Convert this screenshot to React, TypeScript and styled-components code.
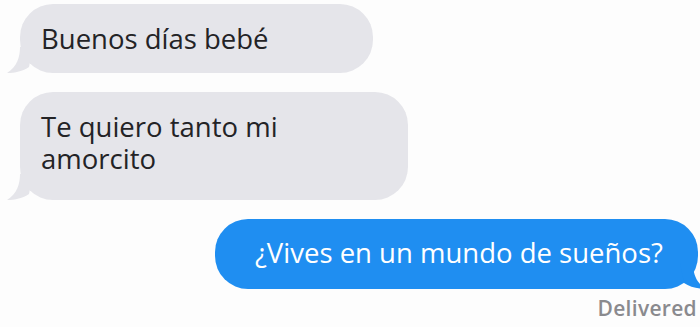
import React from 'react';
import styled, {createGlobalStyle} from "styled-components";

const GlobalStyle = createGlobalStyle`
    body {
        margin: 0;
        background: #fdfdfd;
        font-family: "Open Sans", "Liberation Sans", sans-serif;
    }
`;

const Thread = styled.div`
    width: 700px;
    height: 327px;
    box-sizing: border-box;
    padding: 4px 2px 0 20px;
    display: flex;
    flex-direction: column;
    gap: 19px;
    overflow: hidden;
`;

const Bubble = styled.div<{$mine?: boolean; $width: number; $bottom?: number}>`
    position: relative;
    box-sizing: border-box;
    width: ${p => p.$width}px;
    align-self: ${p => p.$mine ? 'flex-end' : 'flex-start'};
    padding: ${p => p.$mine ? '18px 30px' : '19px 20px'} ${p => p.$bottom ?? 18}px ${p => p.$mine ? '40px' : '21px'};
    border-radius: 33px;
    background: ${p => p.$mine ? '#1f8ef1' : '#e5e5ea'};
    color: ${p => p.$mine ? '#ffffff' : '#232326'};
    font-size: 27.5px;
    line-height: 32px;
`;

const Line = styled.span`
    display: block;
`;

const Tail = styled.svg<{$mine?: boolean}>`
    position: absolute;
    bottom: 0;
    width: 26px;
    height: 26px;
    ${p => p.$mine ? 'right: -8px; transform: scaleX(-1);' : 'left: -13px;'}
`;

const Status = styled.div`
    align-self: flex-end;
    margin-top: -14px;
    margin-right: 1px;
    color: #8a8a8e;
    font-size: 21px;
    font-weight: 600;
    letter-spacing: 0.3px;
`;

const BubbleTail: React.FC<{mine?: boolean; color: string}> = ({mine, color}) => (
    <Tail $mine={mine} viewBox="0 0 26 26">
        <path d="M13 0 C13 10 10 20 0 26 C8 26 16 24 22 20 L26 0 Z" fill={color}/>
    </Tail>
);

const App: React.FC = () => {
    return (
        <>
            <GlobalStyle/>
            <Thread>
                <Bubble $width={353}>
                    Buenos días bebé
                    <BubbleTail color="#e5e5ea"/>
                </Bubble>
                <Bubble $width={388} $bottom={25}>
                    <Line>Te quiero tanto mi</Line>
                    <Line>amorcito</Line>
                    <BubbleTail color="#e5e5ea"/>
                </Bubble>
                <Bubble $mine $width={483} $bottom={20}>
                    ¿Vives en un mundo de sueños?
                    <BubbleTail mine color="#1f8ef1"/>
                </Bubble>
                <Status>Delivered</Status>
            </Thread>
        </>
    );
};

export default App;
